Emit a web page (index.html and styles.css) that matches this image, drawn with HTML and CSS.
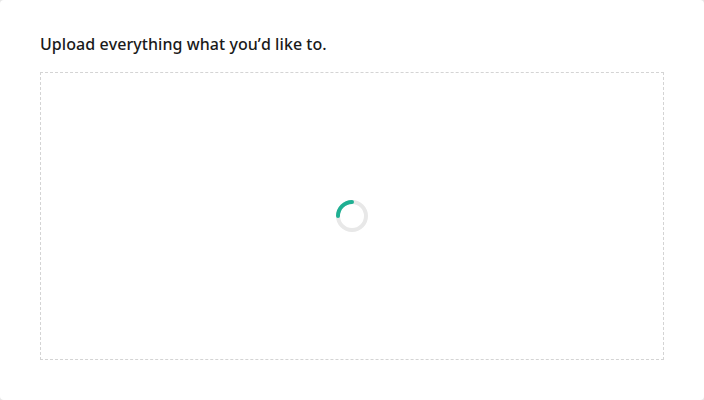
FILE: index.html
```html
<!DOCTYPE html>
<html lang="en">
<head>
<meta charset="utf-8">
<title>Upload</title>
<link rel="stylesheet" href="styles.css">
</head>
<body>
<main class="card">
  <h1 class="title">Upload everything what you’d like to.</h1>
  <div class="dropzone">
    <svg class="spinner" viewBox="0 0 32 32" width="32" height="32" fill="none" stroke-width="4">
      <circle cx="16" cy="16" r="14" stroke="#e8e8e8"/>
      <path d="M2 16A14 14 0 0 1 16 2" stroke="#1fb093" stroke-linecap="round"/>
    </svg>
  </div>
</main>
</body>
</html>
```
FILE: styles.css
```css
* { box-sizing: border-box; }
body { margin: 0; background: #e6e6e6; }
.card {
  display: flex;
  flex-direction: column;
  gap: 16px;
  height: 400px;
  padding: 32px 40px 40px;
  background: #fff;
  border-radius: 4px;
}
.title {
  margin: 0;
  font: 500 16px/24px "Noto Sans", sans-serif;
  font-kerning: none;
  letter-spacing: 0.06px;
  color: #1a1a1a;
}
.dropzone {
  flex: 1;
  display: flex;
  align-items: center;
  justify-content: center;
  border: 1px dashed #d4d4d4;
}
```
